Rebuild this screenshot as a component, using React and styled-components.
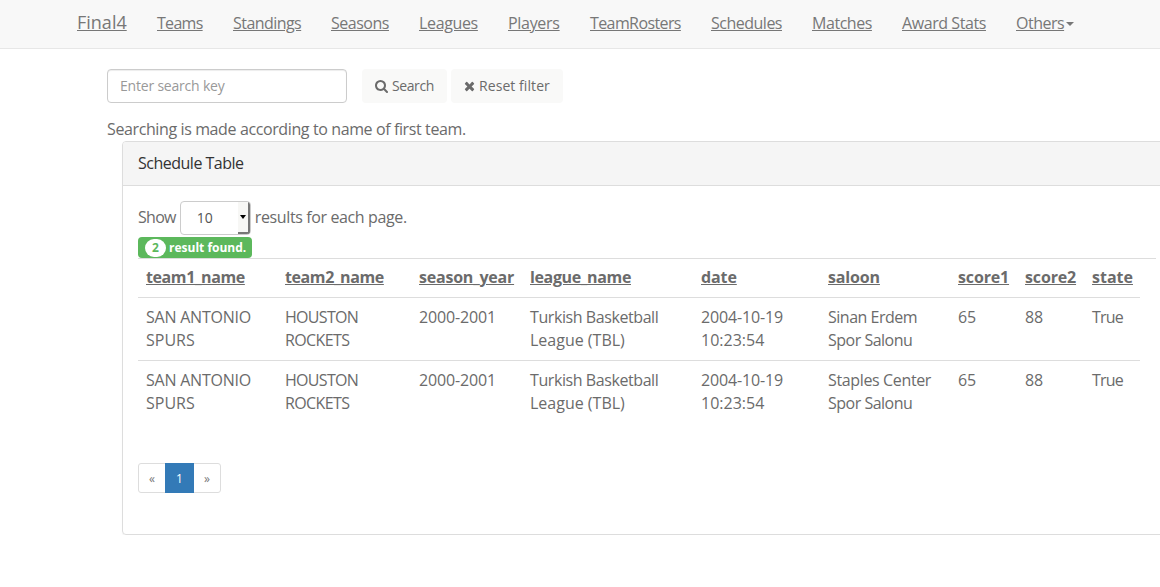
import React from "react";
import styled, { createGlobalStyle } from "styled-components";

const GlobalStyle = createGlobalStyle`
  * { box-sizing: border-box; }
  body {
    margin: 0;
    overflow: hidden;
    background: #fff;
    color: #6b6b6b;
    font: 16px/23px "Open Sans", "Noto Sans", sans-serif;
  }
`;

const Text = styled.span`
  display: inline-block;
  white-space: nowrap;
  letter-spacing: ${(p) => p.$ls || 0}px;
`;

const Navbar = styled.nav`
  display: flex;
  gap: 30px;
  height: 49px;
  padding: 12px 0 0 77px;
  background: #f8f8f8;
  border-bottom: 1px solid #e7e7e7;
`;

const NavLink = styled.a`
  flex: 0 0 ${(p) => p.$w}px;
  min-width: 0;
  display: flex;
  align-items: center;
  height: 23px;
  margin-top: ${(p) => (p.$brand ? -1 : 0)}px;
  color: #777;
  white-space: nowrap;
  text-decoration: underline;
  font-size: ${(p) => (p.$brand ? 18 : 16)}px;
  letter-spacing: ${(p) => p.$ls || 0}px;
`;

const Caret = styled.i`
  flex: none;
  margin-left: 2px;
  border-top: 4px solid #777;
  border-left: 4px solid transparent;
  border-right: 4px solid transparent;
`;

const Content = styled.main`
  padding: 20px 0 0 107px;
`;

const SearchRow = styled.form`
  display: flex;
  height: 34px;
`;

const SearchInput = styled.input`
  width: 240px;
  height: 34px;
  margin-right: 15px;
  padding: 5px 12px 7px;
  border: 1px solid #ccc;
  border-radius: 4px;
  box-shadow: inset 0 1px 1px rgba(0, 0, 0, 0.075);
  font: 14px/20px "Open Sans", sans-serif;
  letter-spacing: -0.2px;
  &::placeholder { color: #999; opacity: 1; }
`;

const Button = styled.button`
  display: flex;
  align-items: center;
  gap: 4px;
  width: ${(p) => p.$w}px;
  height: 34px;
  margin-right: 4px;
  padding: 0 0 0 13px;
  border: 0;
  border-radius: 4px;
  background: #f9f9f8;
  color: #6b6b6b;
  font: 14px/20px "Open Sans", sans-serif;
  white-space: nowrap;
  svg { flex: none; fill: currentColor; }
`;

const Hint = styled.p`
  margin: 15px 0 0;
  height: 23px;
`;

const Panel = styled.section`
  width: 1060px;
  height: 394px;
  margin-left: 15px;
  border: 1px solid #ddd;
  border-radius: 4px;
  box-shadow: 0 1px 1px rgba(0, 0, 0, 0.05);
`;

const PanelHeading = styled.header`
  height: 44px;
  padding: 10px 15px;
  border-bottom: 1px solid #ddd;
  border-radius: 3px 3px 0 0;
  background: #f5f5f5;
  color: #333;
`;

const PanelBody = styled.div`
  padding: 15px;
`;

const PageSize = styled.div`
  display: flex;
  align-items: center;
  height: 34px;
  padding-bottom: 1px;
`;

const Select = styled.div`
  display: flex;
  justify-content: space-between;
  width: 71px;
  height: 34px;
  margin: 1px 4px 0;
  border: 1px solid #ccc;
  border-radius: 4px;
  overflow: hidden;
  color: #555;
  font-size: 14px;
  line-height: 31px;
  padding-left: 16px;
`;

const SelectArrow = styled.span`
  display: flex;
  align-items: center;
  justify-content: center;
  width: 12px;
  background: #f7f7f5;
  border-right: 2px solid #777;
  border-bottom: 2px solid #777;
  &::after {
    content: "";
    border-top: 4px solid #000;
    border-left: 3.5px solid transparent;
    border-right: 3.5px solid transparent;
  }
`;

const ResultLabel = styled.div`
  display: flex;
  align-items: center;
  width: 114px;
  height: 21px;
  margin-top: 2px;
  padding-left: 7px;
  border-radius: 4px;
  background: #5cb85c;
  color: #fff;
  font-size: 12px;
  font-weight: 700;
`;

const Badge = styled.span`
  width: 21px;
  height: 18px;
  margin: 1px 3px 0 0;
  border-radius: 9px;
  background: #fff;
  color: #5cb85c;
  line-height: 18px;
  text-align: center;
`;

const TableArea = styled.div`
  width: 1018px;
  height: 205px;
  border-top: 1px solid #ddd;
`;

const Table = styled.table`
  width: 1002px;
  table-layout: fixed;
  border-collapse: separate;
  border-spacing: 0;
`;

const HeadCell = styled.th`
  height: 38px;
  padding: 7px 8px 8px;
  text-align: left;
  vertical-align: top;
  white-space: nowrap;
  text-decoration: underline;
  letter-spacing: ${(p) => p.$ls || 0}px;
`;

const Cell = styled.td`
  height: 63px;
  padding: 8px 0 8px 8px;
  border-top: 1px solid #ddd;
  vertical-align: top;
  white-space: nowrap;
`;

const Line = styled.div`
  letter-spacing: ${(p) => p.$ls || 0}px;
`;

const Pagination = styled.nav`
  display: flex;
  width: 83px;
  height: 30px;
  border: 1px solid #ddd;
  border-radius: 3px;
`;

const PageLink = styled.a`
  display: flex;
  align-items: center;
  justify-content: center;
  width: ${(p) => (p.$active ? 29 : 26)}px;
  height: ${(p) => (p.$active ? 30 : 28)}px;
  margin-top: ${(p) => (p.$active ? -1 : 0)}px;
  background: ${(p) => (p.$active ? "#337ab7" : "transparent")};
  color: ${(p) => (p.$active ? "#fff" : "#777")};
  font-size: 12px;
`;

const SearchIcon = () => (
  <svg width="13" height="14" viewBox="0 0 1664 1792">
    <path d="M1152 832q0-185-131.5-316.5t-316.5-131.5-316.5 131.5-131.5 316.5 131.5 316.5 316.5 131.5 316.5-131.5 131.5-316.5zm512 832q0 52-38 90t-90 38q-54 0-90-38l-343-342q-179 124-399 124-143 0-273.5-55.5t-225-150-150-225-55.5-273.5 55.5-273.5 150-225 225-150 273.5-55.5 273.5 55.5 225 150 150 225 55.5 273.5q0 220-124 399l343 343q37 37 37 90z" />
  </svg>
);

const TimesIcon = () => (
  <svg width="11" height="14" viewBox="192 0 1408 1792">
    <path d="M1490 1322q0 40-28 68l-136 136q-28 28-68 28t-68-28l-294-294-294 294q-28 28-68 28t-68-28l-136-136q-28-28-28-68t28-68l294-294-294-294q-28-28-28-68t28-68l136-136q28-28 68-28t68 28l294 294 294-294q28-28 68-28t68 28l136 136q28 28 28 68t-28 68l-294 294 294 294q28 28 28 68z" />
  </svg>
);

const links = [
  ["Teams", 46, -0.7],
  ["Standings", 68, -0.55],
  ["Seasons", 58, -0.48],
  ["Leagues", 59, -0.35],
  ["Players", 52, -0.3],
  ["TeamRosters", 91, -0.6],
  ["Schedules", 71, -0.5],
  ["Matches", 60, -0.45],
  ["Award Stats", 84, -0.42],
];

const columns = [
  ["team1_name", 139, -0.4],
  ["team2_name", 134, -0.4],
  ["season_year", 111, -0.22],
  ["league_name", 171, -0.36],
  ["date", 127, -0.1],
  ["saloon", 130, -0.15],
  ["score1", 67, -0.15],
  ["score2", 67, -0.15],
  ["state", 56, 0],
];

const makeRow = (saloon) => [
  [["SAN ANTONIO", -0.23], ["SPURS", 0]],
  [["HOUSTON", -0.7], ["ROCKETS", -0.6]],
  [["2000-2001", -0.15]],
  [["Turkish Basketball", -0.42], ["League (TBL)", 0]],
  [["2004-10-19", -0.15], ["10:23:54", 0]],
  [saloon, ["Spor Salonu", -0.5]],
  [["65", -0.2]],
  [["88", -0.2]],
  [["True", -0.8]],
];

const rows = [makeRow(["Sinan Erdem", -0.5]), makeRow(["Staples Center", -0.36])];

export default function App() {
  return (
    <>
      <GlobalStyle />
      <Navbar>
        <NavLink $brand $w={50}>Final4</NavLink>
        {links.map(([label, w, ls]) => (
          <NavLink key={label} $w={w} $ls={ls}>{label}</NavLink>
        ))}
        <NavLink $w={58} $ls={-0.5}>Others<Caret /></NavLink>
      </Navbar>
      <Content>
        <SearchRow>
          <SearchInput placeholder="Enter search key" />
          <Button type="button" $w={85}><SearchIcon /><Text $ls={-0.4}>Search</Text></Button>
          <Button type="button" $w={112}><TimesIcon /><Text $ls={0.07}>Reset filter</Text></Button>
        </SearchRow>
        <Hint><Text $ls={-0.385}>Searching is made according to name of first team.</Text></Hint>
        <Panel>
          <PanelHeading><Text $ls={-0.5}>Schedule Table</Text></PanelHeading>
          <PanelBody>
            <PageSize>
              <Text $ls={-0.7}>Show</Text>
              <Select>10<SelectArrow /></Select>
              <Text $ls={-0.38}>results for each page.</Text>
            </PageSize>
            <ResultLabel><Badge>2</Badge><Text>result found.</Text></ResultLabel>
            <TableArea>
              <Table>
                <colgroup>
                  {columns.map(([name, w]) => <col key={name} width={w} />)}
                </colgroup>
                <thead>
                  <tr>{columns.map(([name, , ls]) => <HeadCell key={name} $ls={ls}>{name}</HeadCell>)}</tr>
                </thead>
                <tbody>
                  {rows.map((row, r) => (
                    <tr key={r}>
                      {row.map((lines, c) => (
                        <Cell key={c}>
                          {lines.map(([text, ls]) => <Line key={text} $ls={ls}>{text}</Line>)}
                        </Cell>
                      ))}
                    </tr>
                  ))}
                </tbody>
              </Table>
            </TableArea>
            <Pagination>
              <PageLink>«</PageLink>
              <PageLink $active>1</PageLink>
              <PageLink>»</PageLink>
            </Pagination>
          </PanelBody>
        </Panel>
      </Content>
    </>
  );
}
